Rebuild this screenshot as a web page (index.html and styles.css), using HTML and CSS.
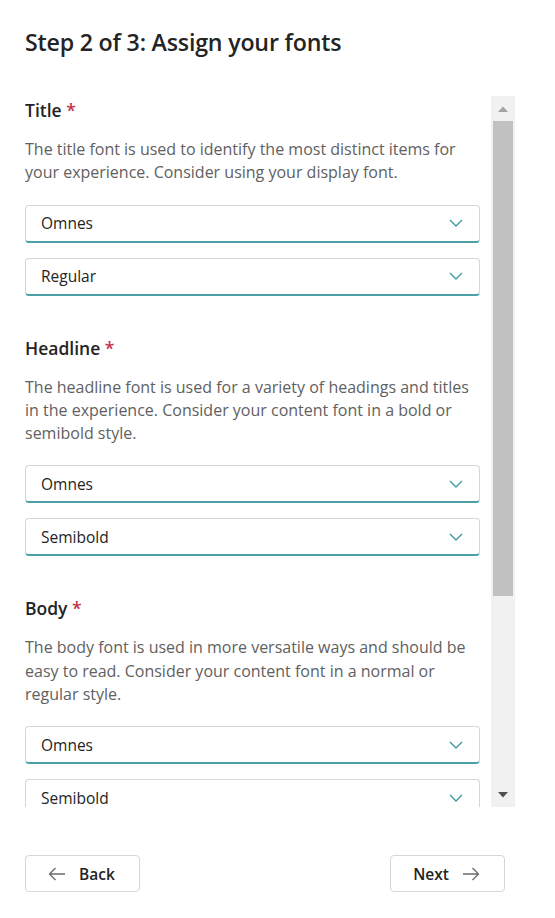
FILE: index.html
```html
<!DOCTYPE html>
<html lang="en">
<head>
<meta charset="utf-8">
<title>Assign your fonts</title>
<link rel="stylesheet" href="styles.css">
</head>
<body>
<div class="page">
  <h1 class="page-title">Step 2 of 3: Assign your fonts</h1>
  <div class="viewport">
    <div class="scroll">
      <section class="group">
        <h2 class="group-title">Title <span class="req">*</span></h2>
        <p class="group-desc">The title font is used to identify the most distinct items for your experience. Consider using your display font.</p>
        <div class="selects">
          <div class="select"><span>Omnes</span><svg class="chev" viewBox="0 0 14 8" width="14" height="8"><path d="M1 1l6 6 6-6" fill="none" stroke="#3d9aa0" stroke-width="1.4"/></svg></div>
          <div class="select"><span>Regular</span><svg class="chev" viewBox="0 0 14 8" width="14" height="8"><path d="M1 1l6 6 6-6" fill="none" stroke="#3d9aa0" stroke-width="1.4"/></svg></div>
        </div>
      </section>
      <section class="group">
        <h2 class="group-title">Headline <span class="req">*</span></h2>
        <p class="group-desc">The headline font is used for a variety of headings and titles in the experience. Consider your content font in a bold or semibold style.</p>
        <div class="selects">
          <div class="select"><span>Omnes</span><svg class="chev" viewBox="0 0 14 8" width="14" height="8"><path d="M1 1l6 6 6-6" fill="none" stroke="#3d9aa0" stroke-width="1.4"/></svg></div>
          <div class="select"><span>Semibold</span><svg class="chev" viewBox="0 0 14 8" width="14" height="8"><path d="M1 1l6 6 6-6" fill="none" stroke="#3d9aa0" stroke-width="1.4"/></svg></div>
        </div>
      </section>
      <section class="group">
        <h2 class="group-title">Body <span class="req">*</span></h2>
        <p class="group-desc">The body font is used in more versatile ways and should be easy to read. Consider your content font in a normal or regular style.</p>
        <div class="selects">
          <div class="select"><span>Omnes</span><svg class="chev" viewBox="0 0 14 8" width="14" height="8"><path d="M1 1l6 6 6-6" fill="none" stroke="#3d9aa0" stroke-width="1.4"/></svg></div>
          <div class="select"><span>Semibold</span><svg class="chev" viewBox="0 0 14 8" width="14" height="8"><path d="M1 1l6 6 6-6" fill="none" stroke="#3d9aa0" stroke-width="1.4"/></svg></div>
        </div>
      </section>
    </div>
    <div class="scrollbar" aria-hidden="true">
      <div class="sb-btn"><svg viewBox="0 0 10 6" width="10" height="6"><path d="M0 6L5 0.5 10 6z" fill="#a3a3a3"/></svg></div>
      <div class="sb-thumb"></div>
      <div class="sb-space"></div>
      <div class="sb-btn"><svg viewBox="0 0 10 6" width="10" height="6"><path d="M0 0L5 5.5 10 0z" fill="#505050"/></svg></div>
    </div>
  </div>
  <div class="footer">
    <button class="btn"><svg viewBox="0 0 18 14" width="18" height="14"><path d="M17 7H1.5M7.5 1L1.5 7l6 6" fill="none" stroke="#6b6b6b" stroke-width="1.3"/></svg><span>Back</span></button>
    <button class="btn"><span>Next</span><svg viewBox="0 0 18 14" width="18" height="14"><path d="M1 7h15.5M10.5 1l6 6-6 6" fill="none" stroke="#6b6b6b" stroke-width="1.3"/></svg></button>
  </div>
</div>
</body>
</html>
```
FILE: styles.css
```css
html, body {
  margin: 0;
  padding: 0;
  background: #ffffff;
}
body {
  font-family: "Open Sans", "Noto Sans", "Liberation Sans", sans-serif;
  color: #242424;
}
.page {
  padding: 28px 0 0 25px;
  width: 490px;
}
.page-title {
  margin: 0;
  font-size: 23.2px;
  line-height: 28px;
  font-weight: 600;
  color: #242424;
  letter-spacing: -0.2px;
}
.viewport {
  margin-top: 40px;
  height: 711px;
  display: flex;
  gap: 11px;
}
.scroll {
  width: 455px;
  overflow: hidden;
}
.scrollbar {
  width: 24px;
  background: #f1f1f1;
  display: flex;
  flex-direction: column;
}
.sb-btn {
  height: 25px;
  flex: none;
  display: flex;
  align-items: center;
  justify-content: center;
}
.sb-btn svg {
  display: block;
}
.sb-thumb {
  height: 475px;
  flex: none;
  margin: 0 2px;
  background: #c1c1c1;
}
.sb-space {
  flex: 1;
}
.group {
  margin-bottom: 40px;
}
.group:first-child {
  padding-top: 2px;
}
.group-title {
  margin: 0;
  font-size: 17.5px;
  line-height: 24px;
  font-weight: 600;
  color: #242424;
}
.req {
  color: #c4314b;
  font-weight: 600;
}
.group-desc {
  margin: 16px 0 20px;
  font-size: 16px;
  line-height: 23.3px;
  color: #616161;
}
.selects {
  display: flex;
  flex-direction: column;
  gap: 15px;
}
.select {
  height: 38px;
  box-sizing: border-box;
  border: 1px solid #d6d6d6;
  border-bottom: 2px solid #4aa0a5;
  border-radius: 4px;
  display: flex;
  align-items: center;
  justify-content: space-between;
  padding: 0 16px 0 15px;
  font-size: 15.5px;
  color: #242424;
}
.chev {
  display: block;
}
.footer {
  margin-top: 48px;
  width: 480px;
  display: flex;
  justify-content: space-between;
}
.btn {
  width: 115px;
  height: 37px;
  box-sizing: border-box;
  border: 1px solid #d6d6d6;
  border-radius: 4px;
  background: #ffffff;
  display: flex;
  align-items: center;
  justify-content: center;
  gap: 13px;
  font-family: "Open Sans", "Noto Sans", "Liberation Sans", sans-serif;
  font-size: 15.5px;
  line-height: 20px;
  font-weight: 600;
  color: #242424;
  padding: 0 2px 0 0;
}
.btn svg {
  display: block;
}
```
